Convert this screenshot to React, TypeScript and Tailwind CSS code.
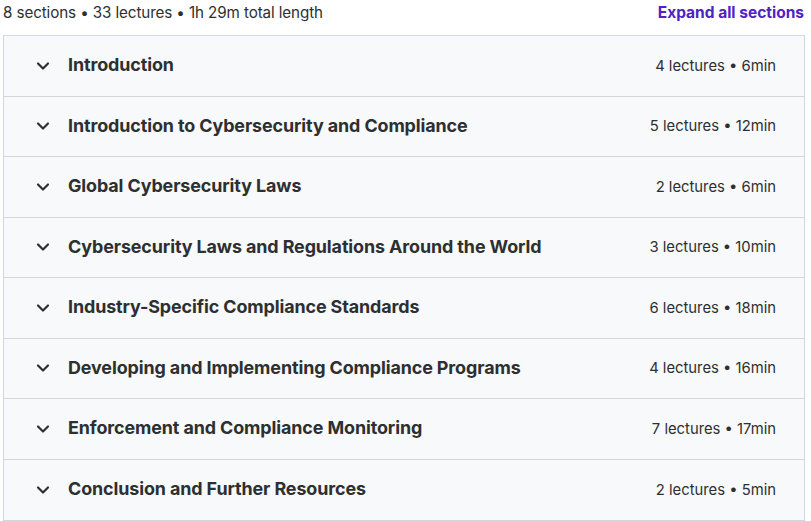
import { ChevronDown } from "lucide-react";

interface Section {
  title: string;
  lectures: number;
  length: string;
}

const sections: Section[] = [
  { title: "Introduction", lectures: 4, length: "6min" },
  { title: "Introduction to Cybersecurity and Compliance", lectures: 5, length: "12min" },
  { title: "Global Cybersecurity Laws", lectures: 2, length: "6min" },
  { title: "Cybersecurity Laws and Regulations Around the World", lectures: 3, length: "10min" },
  { title: "Industry-Specific Compliance Standards", lectures: 6, length: "18min" },
  { title: "Developing and Implementing Compliance Programs", lectures: 4, length: "16min" },
  { title: "Enforcement and Compliance Monitoring", lectures: 7, length: "17min" },
  { title: "Conclusion and Further Resources", lectures: 2, length: "5min" },
];

export default function App() {
  return (
    <div className="w-[811px] h-[521px] bg-white pl-[3px] pr-[6px] text-[#2d2f31] font-['Inter','Noto_Sans',sans-serif] overflow-hidden">
      {/* Summary bar */}
      <div className="flex items-center justify-between h-[26px]">
        <span className="text-[15.2px] tracking-[-0.1px]">
          8 sections • 33 lectures • 1h 29m total length
        </span>
        <button className="text-[15.5px] font-bold text-[#5022c3] pr-[1px]">
          Expand all sections
        </button>
      </div>

      {/* Sections */}
      <div className="mt-[9px] border border-[#d1d7dc]">
        {sections.map((s, i) => (
          <div
            key={s.title}
            className={`flex items-center justify-between h-[60.5px] bg-[#f7f9fa] pl-[29px] pr-[28px] ${
              i < sections.length - 1 ? "border-b border-[#d1d7dc]" : ""
            }`}
          >
            <div className="flex items-center">
              <ChevronDown className="w-[20px] h-[20px] text-[#2d2f31]" strokeWidth={2.6} />
              <span className="ml-[15px] text-[17.9px] font-bold tracking-[-0.1px]">{s.title}</span>
            </div>
            <span className="text-[14.8px]">
              {s.lectures} lectures • {s.length}
            </span>
          </div>
        ))}
      </div>
    </div>
  );
}
